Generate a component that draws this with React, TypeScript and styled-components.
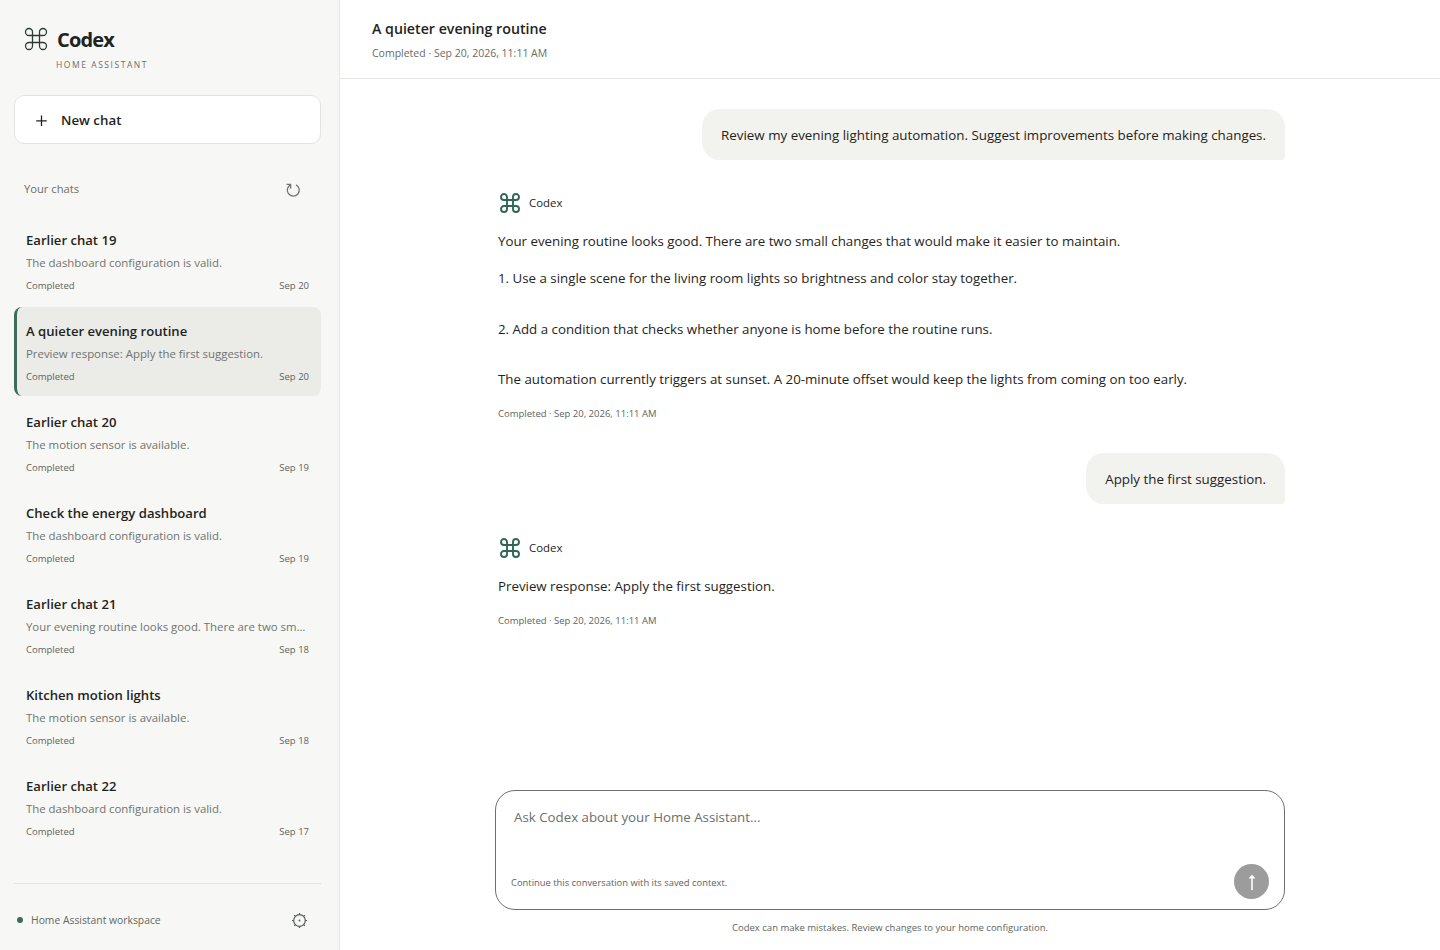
import React from 'react';
import styled, { createGlobalStyle } from 'styled-components';

const GlobalStyle = createGlobalStyle`
  * { box-sizing: border-box; }
  html, body { margin: 0; height: 100%; }
  body {
    font-family: "Open Sans", "Noto Sans", sans-serif;
    color: #1f2421;
    background: #fff;
  }
`;

const Shell = styled.div`
  display: flex;
  width: 1440px;
  height: 950px;
  overflow: hidden;
`;

const Sidebar = styled.aside`
  width: 340px;
  flex-shrink: 0;
  display: flex;
  flex-direction: column;
  background: #f7f7f5;
  border-right: 1px solid #e6e6e2;
  padding: 0 18px 0 14px;
`;

const Brand = styled.div`
  padding: 26px 0 0 8px;
  height: 95px;
`;

const BrandRow = styled.div`
  display: flex;
  align-items: center;
  gap: 7px;
  height: 26px;
`;

const BrandName = styled.span`
  font-size: 20px;
  font-weight: 700;
  letter-spacing: -0.85px;
  color: #1f2421;
`;

const BrandSub = styled.div`
  margin: 7px 0 0 34px;
  font-size: 8.5px;
  letter-spacing: 1.55px;
  color: #6a706c;
`;

const NewChat = styled.button`
  display: flex;
  align-items: center;
  gap: 12px;
  height: 49px;
  width: 100%;
  padding: 0 20px;
  background: #fff;
  border: 1px solid #e3e3df;
  border-radius: 10px;
  font: 600 13.3px "Open Sans", sans-serif;
  color: #1f2421;
`;

const PlusIcon = styled.svg`
  margin-top: 2px;
`;

const ChatsHeader = styled.div`
  display: flex;
  align-items: center;
  justify-content: space-between;
  padding: 0 19px 0 10px;
  margin-top: 31px;
  height: 26px;
  font-size: 11.2px;
  color: #6a706c;
`;

const RefreshIcon = styled.svg`
  margin-top: 3px;
`;

const ChatList = styled.div`
  display: flex;
  flex-direction: column;
  gap: 2px;
  margin-top: 15px;
  flex: 1;
`;

const ChatItem = styled.div<{ $active?: boolean }>`
  height: 89px;
  padding: 15px 12px 0 ${p => (p.$active ? 9 : 12)}px;
  border-radius: 8px;
  background: ${p => (p.$active ? '#ebebe7' : 'transparent')};
  border-left: ${p => (p.$active ? '3px solid #3e6b5c' : 'none')};
`;

const ChatTitle = styled.div`
  font-size: 13.1px;
  font-weight: 600;
  line-height: 18px;
  color: #1f2421;
`;

const ChatPreview = styled.div`
  margin-top: 5px;
  font-size: 11.4px;
  line-height: 18px;
  color: #6f7471;
  white-space: nowrap;
  overflow: hidden;
  text-overflow: ellipsis;
`;

const ChatMeta = styled.div`
  display: flex;
  justify-content: space-between;
  margin-top: 7px;
  font-size: 9.5px;
  line-height: 14px;
  color: #5d645f;
`;

const SidebarFooter = styled.div`
  display: flex;
  align-items: center;
  justify-content: space-between;
  height: 67px;
  padding: 6px 13px 0 3px;
  border-top: 1px solid #e3e3df;
  font-size: 10.35px;
  color: #626864;
`;

const Workspace = styled.div`
  display: flex;
  align-items: center;
  gap: 8px;
`;

const Dot = styled.span`
  width: 6px;
  height: 6px;
  border-radius: 50%;
  background: #3e6b5c;
`;

const Main = styled.main`
  flex: 1;
  display: flex;
  flex-direction: column;
  min-width: 0;
`;

const TopBar = styled.header`
  height: 79px;
  flex-shrink: 0;
  padding: 19px 32px 0;
  border-bottom: 1px solid #e6e6e2;
`;

const TopTitle = styled.div`
  font-size: 14.2px;
  font-weight: 600;
  line-height: 20px;
`;

const TopSub = styled.div`
  margin-top: 5px;
  font-size: 10.5px;
  line-height: 18px;
  color: #666c68;
`;

const Thread = styled.div`
  flex: 1;
  width: 787px;
  margin-left: 158px;
  padding-top: 30px;
  display: flex;
  flex-direction: column;
`;

const UserBubble = styled.div`
  align-self: flex-end;
  padding: 16px 19px 15px;
  background: #f2f2ef;
  border-radius: 18px 18px 4px 18px;
  font-size: 13.35px;
  line-height: 20px;
`;

const Reply = styled.div<{ $top: number; $gap: number }>`
  margin-top: ${p => p.$top}px;
  margin-bottom: ${p => p.$gap}px;
`;

const ReplyHead = styled.div`
  display: flex;
  align-items: center;
  gap: 7px;
  font-size: 11.4px;
  font-weight: 500;
  height: 23px;
  margin-bottom: 17px;
`;

const Para = styled.p<{ $after?: number }>`
  margin: 0 0 ${p => p.$after ?? 17}px;
  font-size: 13.3px;
  line-height: 20px;
`;

const Stamp = styled.div`
  font-size: 9.5px;
  line-height: 14px;
  color: #5d645f;
`;

const ComposerWrap = styled.div`
  width: 790px;
  margin-left: 155px;
  flex-shrink: 0;
`;

const Composer = styled.div`
  position: relative;
  height: 120px;
  padding: 16px 18px;
  background: #fff;
  border: 1px solid #6f6f6f;
  border-radius: 20px;
`;

const Placeholder = styled.div`
  font-size: 13.3px;
  line-height: 20px;
  color: #6a706c;
`;

const Hint = styled.div`
  position: absolute;
  left: 15px;
  bottom: 20px;
  font-size: 9.4px;
  color: #5d645f;
`;

const SendButton = styled.button`
  position: absolute;
  right: 15px;
  bottom: 10px;
  width: 35px;
  height: 35px;
  border: none;
  border-radius: 50%;
  background: #9c9c9c;
  display: flex;
  align-items: center;
  justify-content: center;
  padding: 0;
`;

const Disclaimer = styled.div`
  height: 40px;
  padding-top: 11px;
  text-align: center;
  font-size: 9.5px;
  color: #5d645f;
`;

const CommandIcon = ({ size, color, weight }: { size: number; color: string; weight: number }) => (
  <svg width={size} height={size} viewBox="0 0 24 24" fill="none" stroke={color} strokeWidth={weight} strokeLinecap="round" strokeLinejoin="round">
    <path d="M15 6v12a3 3 0 1 0 3-3H6a3 3 0 1 0 3 3V6a3 3 0 1 0-3 3h12a3 3 0 1 0-3-3" />
  </svg>
);

const chats = [
  { title: 'Earlier chat 19', preview: 'The dashboard configuration is valid.', date: 'Sep 20' },
  { title: 'A quieter evening routine', preview: 'Preview response: Apply the first suggestion.', date: 'Sep 20', active: true },
  { title: 'Earlier chat 20', preview: 'The motion sensor is available.', date: 'Sep 19' },
  { title: 'Check the energy dashboard', preview: 'The dashboard configuration is valid.', date: 'Sep 19' },
  { title: 'Earlier chat 21', preview: 'Your evening routine looks good. There are two small changes', date: 'Sep 18' },
  { title: 'Kitchen motion lights', preview: 'The motion sensor is available.', date: 'Sep 18' },
  { title: 'Earlier chat 22', preview: 'The dashboard configuration is valid.', date: 'Sep 17' },
];

const App: React.FC = () => {
  return (
    <Shell>
      <GlobalStyle />
      <Sidebar>
        <Brand>
          <BrandRow>
            <CommandIcon size={28} color="#2b3a34" weight={1.1} />
            <BrandName>Codex</BrandName>
          </BrandRow>
          <BrandSub>HOME ASSISTANT</BrandSub>
        </Brand>
        <NewChat>
          <PlusIcon width="14" height="14" viewBox="0 0 14 14" stroke="#1f2421" strokeWidth="1.3"><path d="M6.5 1.5v10.5M1.2 6.8h10.6" /></PlusIcon>
          New chat
        </NewChat>
        <ChatsHeader>
          Your chats
          <RefreshIcon width="18" height="18" viewBox="0 0 18 18" fill="none" stroke="#727774" strokeWidth="1.3">
            <path d="M7 3.6a6 6 0 1 0 5 .2" /><path d="M6.6 7.6V3.4H2.6" />
          </RefreshIcon>
        </ChatsHeader>
        <ChatList>
          {chats.map(c => (
            <ChatItem key={c.title} $active={c.active}>
              <ChatTitle>{c.title}</ChatTitle>
              <ChatPreview>{c.preview}</ChatPreview>
              <ChatMeta><span>Completed</span><span>{c.date}</span></ChatMeta>
            </ChatItem>
          ))}
        </ChatList>
        <SidebarFooter>
          <Workspace><Dot />Home Assistant workspace</Workspace>
          <svg width="17" height="17" viewBox="0 0 17 17" fill="none" stroke="#55605a" strokeWidth="1.2">
            <circle cx="8.5" cy="8.5" r="5.8" />
            <circle cx="8.5" cy="8.5" r="0.9" fill="#55605a" stroke="none" />
            <path d="M8.5 1v1.6M8.5 14.4V16M1 8.5h1.6M14.4 8.5H16M3.2 3.2l1.1 1.1M12.7 12.7l1.1 1.1M3.2 13.8l1.1-1.1M12.7 4.3l1.1-1.1" />
          </svg>
        </SidebarFooter>
      </Sidebar>
      <Main>
        <TopBar>
          <TopTitle>A quieter evening routine</TopTitle>
          <TopSub>Completed · Sep 20, 2026, 11:11 AM</TopSub>
        </TopBar>
        <Thread>
          <UserBubble>Review my evening lighting automation. Suggest improvements before making changes.</UserBubble>
          <Reply $top={31} $gap={32}>
            <ReplyHead><CommandIcon size={24} color="#2f6658" weight={1.9} />Codex</ReplyHead>
            <Para>Your evening routine looks good. There are two small changes that would make it easier to maintain.</Para>
            <Para $after={31}>1. Use a single scene for the living room lights so brightness and color stay together.</Para>
            <Para $after={30}>2. Add a condition that checks whether anyone is home before the routine runs.</Para>
            <Para $after={18}>The automation currently triggers at sunset. A 20-minute offset would keep the lights from coming on too early.</Para>
            <Stamp>Completed · Sep 20, 2026, 11:11 AM</Stamp>
          </Reply>
          <UserBubble>Apply the first suggestion.</UserBubble>
          <Reply $top={32} $gap={0}>
            <ReplyHead><CommandIcon size={24} color="#2f6658" weight={1.9} />Codex</ReplyHead>
            <Para $after={18}>Preview response: Apply the first suggestion.</Para>
            <Stamp>Completed · Sep 20, 2026, 11:11 AM</Stamp>
          </Reply>
        </Thread>
        <ComposerWrap>
          <Composer>
            <Placeholder>Ask Codex about your Home Assistant...</Placeholder>
            <Hint>Continue this conversation with its saved context.</Hint>
            <SendButton aria-label="Send">
              <svg width="16" height="18" viewBox="0 0 16 18" fill="none" stroke="#fff" strokeWidth="1.6"><path d="M8 17V3M5.5 5.5L8 3l2.5 2.5" /></svg>
            </SendButton>
          </Composer>
          <Disclaimer>Codex can make mistakes. Review changes to your home configuration.</Disclaimer>
        </ComposerWrap>
      </Main>
    </Shell>
  );
};

export default App;
